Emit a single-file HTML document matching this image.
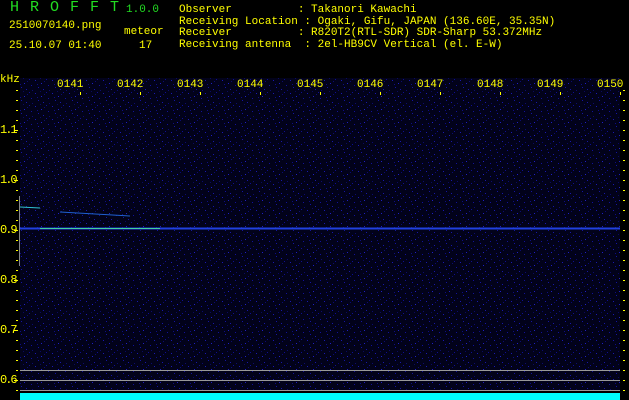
<!DOCTYPE html><html><head><style>
body{margin:0;background:#000;width:629px;height:400px;overflow:hidden;position:relative;font-family:"Liberation Mono",monospace;color:#ff0}
.t{position:absolute;font-size:11px;line-height:12px;white-space:pre}
</style></head><body>
<div class="t" style="left:10px;top:2px;color:#2d2;font-size:15px;letter-spacing:11px">HROFFT</div>
<div class="t" style="left:126px;top:4px;color:#2d2;font-size:11px">1.0.0</div>
<div class="t" style="left:9px;top:20px">2510070140.png</div>
<div class="t" style="left:124px;top:26px">meteor</div>
<div class="t" style="left:139px;top:40px">17</div>
<div class="t" style="left:9px;top:40px">25.10.07 01:40</div>
<div class="t" style="left:179px;top:5px;line-height:11.5px">Observer          : Takanori Kawachi
Receiving Location : Ogaki, Gifu, JAPAN (136.60E, 35.35N)
Receiver          : R820T2(RTL-SDR) SDR-Sharp 53.372MHz
Receiving antenna  : 2el-HB9CV Vertical (el. E-W)</div>
<div class="t" style="left:0;top:74px">kHz</div>
<svg width="629" height="400" style="position:absolute;left:0;top:0">
<defs><pattern id="n" width="17" height="13" patternUnits="userSpaceOnUse">
<rect width="17" height="13" fill="#02021a"/>
<rect x="1" y="2" width="1" height="1" fill="#1a1ab0"/><rect x="7" y="5" width="1" height="1" fill="#2020c0"/>
<rect x="4" y="9" width="1" height="1" fill="#1515a0"/><rect x="12" y="1" width="1" height="1" fill="#101090"/>
<rect x="9" y="11" width="1" height="1" fill="#1818a8"/><rect x="3" y="6" width="1" height="1" fill="#0e0e80"/>
<rect x="14" y="7" width="1" height="1" fill="#12129a"/><rect x="10" y="3" width="1" height="1" fill="#0c0c70"/>
<rect x="15" y="12" width="1" height="1" fill="#0c0c70"/><rect x="6" y="0" width="1" height="1" fill="#0a0a60"/>
</pattern></defs>
<rect x="20" y="78" width="600" height="312" fill="url(#n)"/>
<line x1="20" y1="228.5" x2="620" y2="228.5" stroke="#2040e0" stroke-width="2"/>
<line x1="40" y1="228.5" x2="160" y2="228.5" stroke="#40d0a0" stroke-width="1"/>
<line x1="20" y1="207" x2="40" y2="208" stroke="#30c0d0" stroke-width="1"/>
<line x1="60" y1="212" x2="130" y2="216" stroke="#2060d0" stroke-width="1"/>
<line x1="19.5" y1="196" x2="19.5" y2="266" stroke="#888"/>
<line x1="20" y1="370.5" x2="620" y2="370.5" stroke="#999"/>
<line x1="20" y1="380.5" x2="620" y2="380.5" stroke="#999"/>
<line x1="20" y1="390.5" x2="620" y2="390.5" stroke="#999"/>
<rect x="20" y="393" width="600" height="7" fill="#0ff"/>
<g id="tk" fill="#ff0"></g>
</svg>
<div id="lbl"></div>
<script>
var s='',g='';
for(var i=0;i<10;i++){var x=80+i*60;s+='<div class="t" style="left:'+(x-23)+'px;top:79px;font-size:11px">0'+(141+i)+'</div>';g+='<rect x="'+x+'" y="92" width="1" height="3"/>';}
for(var y=90;y<=390;y+=10){var big=(y%50==30);g+='<rect x="'+(big?14:16)+'" y="'+y+'" width="'+(big?4:2)+'" height="1"/><rect x="623" y="'+y+'" width="2" height="1"/>';}
var v=['1.1','1.0','0.9','0.8','0.7','0.6'];
for(var j=0;j<6;j++)s+='<div class="t" style="left:0;top:'+(123+j*50)+'px;font-size:12px;line-height:14px;letter-spacing:-2px">'+v[j]+'</div>';
document.getElementById('lbl').innerHTML=s;document.getElementById('tk').innerHTML=g;
</script>
</body></html>
